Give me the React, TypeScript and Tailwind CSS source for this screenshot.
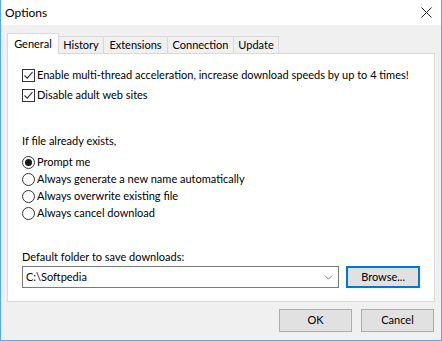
import { ChevronDown } from "lucide-react";

function CheckBox({ label }: { label: string }) {
  return (
    <div className="flex h-[20px] items-center whitespace-nowrap">
      <span className="flex h-[13px] w-[13px] shrink-0 items-center justify-center border border-[#333] bg-white">
        <svg width="11" height="11" viewBox="0 0 11 11">
          <path d="M1.5 5.5 L4.2 8.2 L9.5 2.2" fill="none" stroke="#333" strokeWidth="1.1" />
        </svg>
      </span>
      <span className="ml-[2px]">{label}</span>
    </div>
  );
}

function Radio({ label, checked }: { label: string; checked?: boolean }) {
  return (
    <div className="flex h-[17px] items-center whitespace-nowrap">
      <span className="flex h-[13px] w-[13px] shrink-0 items-center justify-center rounded-full border border-[#333] bg-white">
        {checked && <span className="h-[7px] w-[7px] rounded-full bg-[#1a1a1a]" />}
      </span>
      <span className="ml-[2px]">{label}</span>
    </div>
  );
}

export default function App() {
  const tabs = [
    { label: "History", w: "w-[46px]" },
    { label: "Extensions", w: "w-[65px]" },
    { label: "Connection", w: "w-[67px]" },
    { label: "Update", w: "w-[46px]" },
  ];

  return (
    <div
      className="flex h-[341px] w-[442px] flex-col border border-t-0 border-[#5ea6e6] bg-[#f0f0f0] text-[11px] text-black"
      style={{ fontFamily: 'Lato, "Liberation Sans", sans-serif' }}
    >
      {/* title bar */}
      <div className="flex h-[25px] items-center justify-between bg-white pl-[4px] pr-[9px]">
        <span className="text-[12px]">Options</span>
        <svg width="11" height="11" viewBox="0 0 11 11">
          <path d="M0.5 0.5 L10.5 10.5 M10.5 0.5 L0.5 10.5" stroke="#222" strokeWidth="1" />
        </svg>
      </div>

      <div className="px-[6px] pt-[8px]">
        {/* tabs */}
        <div className="flex h-[20px] items-end">
          <div className="relative z-10 -mb-px flex h-[21px] w-[52px] items-center justify-center border border-b-0 border-[#d9d9d9] bg-white">
            General
          </div>
          {tabs.map((t) => (
            <div
              key={t.label}
              className={`-ml-px flex h-[17px] items-center justify-center border border-b-0 border-[#d9d9d9] bg-[#f0f0f0] first:ml-0 ${t.w}`}
            >
              {t.label}
            </div>
          ))}
        </div>

        {/* panel */}
        <div className="flex h-[249px] flex-col border border-[#d9d9d9] bg-white pl-[14px] pr-[14px] pt-[11px]">
          <CheckBox label="Enable multi-thread acceleration, increase download speeds by up to 4 times!" />
          <CheckBox label="Disable adult web sites" />

          <div className="mt-[28px] flex h-[17px] items-center">If file already exists,</div>
          <div className="mt-[4px] flex flex-col">
            <Radio label="Prompt me" checked />
            <Radio label="Always generate a new name automatically" />
            <Radio label="Always overwrite existing file" />
            <Radio label="Always cancel download" />
          </div>

          <div className="mt-[27px] flex h-[16px] items-center">Default folder to save downloads:</div>
          <div className="mt-px flex items-center">
            <div className="flex h-[22px] w-[318px] items-center justify-between border border-[#7a7a7a] bg-white pl-[3px] pr-[3px]">
              <span>C:\Softpedia</span>
              <ChevronDown size={13} strokeWidth={1.2} className="text-[#444]" />
            </div>
            <button className="ml-[7px] flex h-[22px] w-[74px] items-center justify-center border-2 border-[#0078d7] bg-[#e1e1e1]">
              Browse...
            </button>
          </div>
        </div>
      </div>

      {/* footer buttons */}
      <div className="mt-[7px] flex justify-end gap-[9px] pr-[7px]">
        <button className="flex h-[23px] w-[73px] items-center justify-center border border-[#adadad] bg-[#e1e1e1]">
          OK
        </button>
        <button className="flex h-[23px] w-[73px] items-center justify-center border border-[#adadad] bg-[#e1e1e1]">
          Cancel
        </button>
      </div>
    </div>
  );
}
